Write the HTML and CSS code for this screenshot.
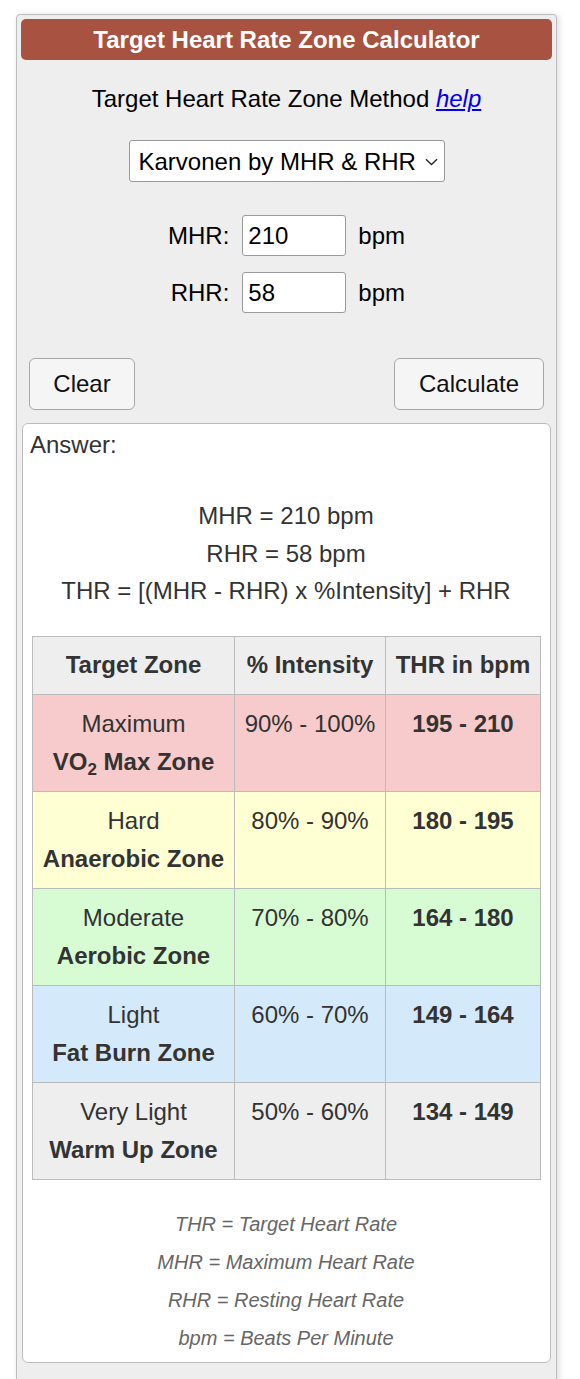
FILE: index.html
```html
<!DOCTYPE html>
<html lang="en">
<head>
<meta charset="utf-8">
<title>Target Heart Rate Zone Calculator</title>
<link rel="stylesheet" href="styles.css">
</head>
<body>
<div class="panel">
  <div class="title">Target Heart Rate Zone Calculator</div>
  <div class="method">Target Heart Rate Zone Method <a href="#" class="help">help</a></div>
  <div class="select-row">
    <span class="select-box">
      <select class="select">
        <option>Karvonen by MHR &amp; RHR</option>
      </select>
      <svg class="chev" width="13" height="8" viewBox="0 0 13 8"><path d="M1 1.2 L6.5 6.5 L12 1.2" fill="none" stroke="#222" stroke-width="1.3"/></svg>
    </span>
  </div>
  <div class="fields">
    <label class="lbl" for="mhr">MHR:</label>
    <input class="inp" id="mhr" type="text" value="210">
    <span class="unit">bpm</span>
    <label class="lbl" for="rhr">RHR:</label>
    <input class="inp" id="rhr" type="text" value="58">
    <span class="unit">bpm</span>
  </div>
  <div class="buttons">
    <button class="btn btn-clear" type="button">Clear</button>
    <button class="btn btn-calc" type="button">Calculate</button>
  </div>
  <div class="answer">
    <div class="answer-label">Answer:</div>
    <div class="formula">
      <div>MHR = 210 bpm</div>
      <div>RHR = 58 bpm</div>
      <div>THR = [(MHR - RHR) x %Intensity] + RHR</div>
    </div>
    <table class="zones">
      <thead>
        <tr><th class="c1">Target Zone</th><th class="c2">% Intensity</th><th class="c3">THR in bpm</th></tr>
      </thead>
      <tbody>
        <tr class="z-max"><td>Maximum<br><b>VO<sub>2</sub> Max Zone</b></td><td>90% - 100%</td><td><b>195 - 210</b></td></tr>
        <tr class="z-hard"><td>Hard<br><b>Anaerobic Zone</b></td><td>80% - 90%</td><td><b>180 - 195</b></td></tr>
        <tr class="z-mod"><td>Moderate<br><b>Aerobic Zone</b></td><td>70% - 80%</td><td><b>164 - 180</b></td></tr>
        <tr class="z-light"><td>Light<br><b>Fat Burn Zone</b></td><td>60% - 70%</td><td><b>149 - 164</b></td></tr>
        <tr class="z-vlight"><td>Very Light<br><b>Warm Up Zone</b></td><td>50% - 60%</td><td><b>134 - 149</b></td></tr>
      </tbody>
    </table>
    <div class="notes">
      <div>THR = Target Heart Rate</div>
      <div>MHR = Maximum Heart Rate</div>
      <div>RHR = Resting Heart Rate</div>
      <div>bpm = Beats Per Minute</div>
    </div>
  </div>
</div>
</body>
</html>
```
FILE: styles.css
```css
html, body {
  margin: 0;
  padding: 0;
  background: #fff;
}
body {
  font-family: "Liberation Sans", Arial, Helvetica, sans-serif;
  font-size: 24px;
  color: #000;
}
.panel {
  box-sizing: border-box;
  width: 541px;
  margin: 14px 0 0 16px;
  padding: 4px 4px 20px 4px;
  background: #eeeeee;
  border: 1px solid #bdbdbd;
  border-radius: 4px;
  box-shadow: 2px 1px 6px rgba(0,0,0,0.14);
}
.title {
  height: 41px;
  line-height: 41px;
  background: #a85241;
  color: #fff;
  font-weight: bold;
  font-size: 24px;
  text-align: center;
  border-radius: 5px;
}
.method {
  margin-top: 20px;
  line-height: 38px;
  text-align: center;
}
.help {
  color: #0000ee;
  font-style: italic;
  text-decoration: underline;
}
.select-row {
  margin-top: 22px;
  display: flex;
  justify-content: center;
}
.select-box {
  box-sizing: border-box;
  display: inline-flex;
  align-items: center;
  width: 316px;
  height: 42px;
  padding: 0 6px 0 9px;
  background: #fff;
  border: 1px solid #9a9a9a;
  border-radius: 3px;
}
.select {
  -webkit-appearance: none;
  appearance: none;
  border: none;
  background: transparent;
  font-family: inherit;
  font-size: 24px;
  color: #000;
  padding: 0;
  margin: 0;
  flex: 1;
  outline: none;
}
.chev {
  display: block;
  margin-top: 1px;
}
.fields {
  margin-top: 33px;
  display: grid;
  grid-template-columns: auto auto auto;
  justify-content: center;
  align-items: center;
  row-gap: 16px;
}
.lbl {
  text-align: right;
  margin-right: 13px;
}
.inp {
  box-sizing: border-box;
  width: 104px;
  height: 41px;
  padding: 0 5px;
  font-family: inherit;
  font-size: 24px;
  color: #000;
  background: #fff;
  border: 1px solid #9a9a9a;
  border-radius: 3px;
  margin: 0;
}
.unit {
  margin-left: 12px;
}
.buttons {
  margin-top: 45px;
  padding: 0 8px;
  display: flex;
  justify-content: space-between;
}
.btn {
  box-sizing: border-box;
  height: 52px;
  padding: 0;
  font-family: inherit;
  font-size: 24px;
  color: #111;
  background: #f5f5f5;
  border: 1px solid #a8a8a8;
  border-radius: 6px;
  margin: 0;
  text-align: center;
}
.btn-clear { width: 106px; }
.btn-calc { width: 150px; }
.answer {
  margin: 13px 1px 0 1px;
  padding: 6px 8px 5px 7px;
  background: #fff;
  border: 1px solid #bdbdbd;
  border-radius: 6px;
  color: #333;
}
.answer-label {
  line-height: 30px;
}
.formula {
  margin-top: 37px;
  line-height: 37.5px;
  text-align: center;
}
.zones {
  margin: 26px 0 0 2px;
  width: 509px;
  border-collapse: collapse;
  table-layout: fixed;
  color: #333;
}
.zones th, .zones td {
  border: 1px solid #bbbbbb;
  padding: 10px 0 10px;
  line-height: 38px;
  text-align: center;
  vertical-align: top;
}
.zones th {
  padding: 9px 0 10px;
  background: #eeeeee;
  font-weight: bold;
  white-space: nowrap;
}
.c1 { width: 201px; }
.c2 { width: 150px; }
.zones sub {
  font-size: 17px;
  line-height: 0;
  vertical-align: -5px;
}
.z-max td { background: #f7cbcb; }
.z-hard td { background: #ffffd4; }
.z-mod td { background: #d7fcd4; }
.z-light td { background: #d4eafb; }
.z-vlight td { background: #eeeeee; }
.notes {
  margin-top: 25px;
  line-height: 38px;
  text-align: center;
  font-size: 20px;
  font-style: italic;
  color: #666;
}
```
